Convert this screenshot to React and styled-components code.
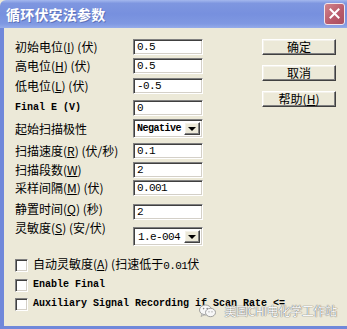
import React from 'react';
import styled, { createGlobalStyle } from 'styled-components';

const GlobalStyle = createGlobalStyle`
  html, body {
    margin: 0;
    padding: 0;
    background: #ece9d8;
  }
`;

const cjk = `"Noto Sans CJK SC", "Noto Sans", sans-serif`;
const mono = `"Liberation Mono", "DejaVu Sans Mono", monospace`;

const Window = styled.div`
  width: 347px;
  height: 329px;
  display: flex;
  flex-direction: column;
  background: #ece9d8;
  position: relative;
  overflow: hidden;
  font-family: ${cjk};
  font-size: 12px;
  color: #000;
`;

const TitleBar = styled.div`
  height: 28px;
  flex: none;
  display: flex;
  align-items: center;
  justify-content: space-between;
  padding: 0 2px 0 6px;
  border-top-left-radius: 6px;
  background: linear-gradient(#a4b8ee 0%, #7e96e0 12%, #7790de 50%, #7f98e2 85%, #95acea 100%);
`;

const Title = styled.span`
  color: #fff;
  font-family: ${cjk};
  font-weight: bold;
  font-size: 14px;
  letter-spacing: 0.2px;
  text-shadow: 1px 1px 0 #5d72b8;
`;

const CloseButton = styled.div`
  width: 19px;
  height: 20px;
  margin-top: -1px;
  display: flex;
  align-items: center;
  justify-content: center;
  border: 1px solid #f3e6ea;
  border-radius: 3px;
  background: linear-gradient(135deg, #d2848c, #b8596a 60%, #a94f60);
`;

const Body = styled.div`
  flex: 1;
  display: flex;
  flex-direction: column;
  border-left: 4px solid #7088da;
  border-bottom: 3px solid #7088da;
  padding: 11px 0 0 11px;
`;

const Top = styled.div`
  display: flex;
  align-items: flex-start;
`;

const Form = styled.div`
  display: flex;
  flex-direction: column;
`;

const Row = styled.div`
  display: flex;
  align-items: center;
  margin-top: ${(p) => p.$gap || 0}px;
`;

const Label = styled.span`
  width: 118px;
  flex: none;
  white-space: nowrap;
  font-family: ${(p) => (p.$latin ? mono : cjk)};
  font-size: ${(p) => (p.$latin ? '10px' : '12px')};
  font-weight: ${(p) => (p.$latin ? 'bold' : 'normal')};
  line-height: 14px;
  position: relative;
  top: ${(p) => -(p.$lift || 0)}px;

  u {
    text-underline-offset: 1px;
  }
`;

const sunken = `
  box-sizing: border-box;
  border-top: 1px solid #808080;
  border-left: 1px solid #808080;
  border-right: 1px solid #ffffff;
  border-bottom: 1px solid #ffffff;
  box-shadow: inset 1px 1px 0 #404040, inset -1px -1px 0 #d4d0c8;
  background: #fff;
`;

const TextField = styled.div`
  ${sunken}
  width: 70px;
  height: 16px;
  padding: 0 3px;
  display: flex;
  align-items: ${(p) => (p.$bottom ? 'flex-end' : 'center')};
  font-family: ${mono};
  font-size: 11px;
  letter-spacing: -0.6px;
  line-height: 13px;
  white-space: nowrap;
`;

const Select = styled.div`
  ${sunken}
  width: 70px;
  height: 19px;
  display: flex;
  align-items: stretch;
  padding: 2px;
`;

const SelectValue = styled.span`
  flex: 1;
  display: flex;
  align-items: center;
  padding-left: ${(p) => p.$pad || 1}px;
  font-family: ${mono};
  font-size: ${(p) => (p.$bold ? '10px' : '11px')};
  font-weight: ${(p) => (p.$bold ? 'bold' : 'normal')};
  letter-spacing: ${(p) => (p.$bold ? '-0.5px' : '-0.6px')};
  white-space: nowrap;
  overflow: hidden;
`;

const raised = `
  box-sizing: border-box;
  background: #ece9d8;
  border-top: 1px solid #ffffff;
  border-left: 1px solid #ffffff;
  border-right: 1px solid #404040;
  border-bottom: 1px solid #404040;
  box-shadow: inset -1px -1px 0 #808080, inset 1px 1px 0 #f4f2ea;
`;

const ArrowButton = styled.div`
  ${raised}
  width: 16px;
  flex: none;
  display: flex;
  align-items: center;
  justify-content: center;
`;

const Arrow = styled.span`
  width: 0;
  height: 0;
  border-left: 4px solid transparent;
  border-right: 4px solid transparent;
  border-top: 4px solid #000;
`;

const Buttons = styled.div`
  margin-left: 59px;
  display: flex;
  flex-direction: column;
  gap: ${(p) => p.$gap}px;
`;

const Button = styled.div`
  ${raised}
  width: 74px;
  height: 16px;
  display: flex;
  align-items: center;
  justify-content: center;
  font-family: ${cjk};
  font-size: 12px;
  line-height: 12px;
  white-space: nowrap;
`;

const Checks = styled.div`
  display: flex;
  flex-direction: column;
  margin-top: 12px;
`;

const CheckRow = styled.div`
  display: flex;
  align-items: center;
  gap: 5px;
  height: 14px;
  margin-top: ${(p) => p.$gap || 0}px;
  white-space: nowrap;
`;

const Box = styled.div`
  ${sunken}
  width: 13px;
  height: 13px;
  flex: none;
`;

const CheckText = styled.span`
  font-family: ${(p) => (p.$latin ? mono : cjk)};
  font-size: ${(p) => (p.$latin ? '10px' : '12px')};
  font-weight: ${(p) => (p.$latin ? 'bold' : 'normal')};
  line-height: 14px;

  em {
    font-style: normal;
    font-family: ${mono};
    font-size: 11px;
    line-height: 14px;
    letter-spacing: -0.6px;
  }
`;

const Watermark = styled.div`
  position: absolute;
  right: 10px;
  bottom: 11px;
  display: flex;
  align-items: center;
  gap: 8px;
  font-family: ${cjk};
  font-size: 12px;
  line-height: 14px;
  color: #f7f7f7;
  text-shadow: 0 0 1px #6a6a6a, 0 0 1px #6a6a6a;
  letter-spacing: -0.3px;
`;

const fields = [
  { label: <>初始电位(<u>I</u>) (伏)</>, value: '0.5', gap: 0 },
  { label: <>高电位(<u>H</u>) (伏)</>, value: '0.5', gap: 3 },
  { label: <>低电位(<u>L</u>) (伏)</>, value: '-0.5', gap: 4 },
  { label: 'Final E (V)', latin: true, value: '0', gap: 6 },
  { label: '起始扫描极性', select: 'Negative', gap: 3 },
  { label: <>扫描速度(<u>R</u>) (伏/秒)</>, value: '0.1', gap: 5 },
  { label: <>扫描段数(<u>W</u>)</>, value: '2', gap: 3, bottom: true },
  { label: <>采样间隔(<u>M</u>) (伏)</>, value: '0.001', gap: 2 },
  { label: <>静置时间(<u>Q</u>) (秒)</>, value: '2', gap: 8, lift: 3, bottom: true },
  { label: <>灵敏度(<u>S</u>) (安/伏)</>, select2: '1.e-004', gap: 7, lift: 9 },
];

function WeChatIcon() {
  return (
    <svg width="17" height="14" viewBox="0 0 17 14">
      <ellipse cx="6.5" cy="6" rx="6" ry="5" fill="#f7f7f7" stroke="#8a8a8a" strokeWidth="0.8" />
      <path d="M3 10 L2 12.5 L5.5 10.6 Z" fill="#f7f7f7" stroke="#8a8a8a" strokeWidth="0.6" />
      <ellipse cx="11.5" cy="8.5" rx="5" ry="4.2" fill="#f7f7f7" stroke="#8a8a8a" strokeWidth="0.8" />
      <circle cx="4.6" cy="4.6" r="0.8" fill="#8a8a8a" />
      <circle cx="8.2" cy="4.6" r="0.8" fill="#8a8a8a" />
      <circle cx="10" cy="7.8" r="0.6" fill="#8a8a8a" />
      <circle cx="13" cy="7.8" r="0.6" fill="#8a8a8a" />
    </svg>
  );
}

export default function App() {
  return (
    <>
      <GlobalStyle />
      <Window>
        <TitleBar>
          <Title>循环伏安法参数</Title>
          <CloseButton>
            <svg width="11" height="11" viewBox="0 0 11 11">
              <path d="M1.5 1.5 L9.5 9.5 M9.5 1.5 L1.5 9.5" stroke="#fff" strokeWidth="2" strokeLinecap="square" />
            </svg>
          </CloseButton>
        </TitleBar>
        <Body>
          <Top>
            <Form>
              {fields.map((f, i) => (
                <Row key={i} $gap={f.gap}>
                  <Label $latin={f.latin} $lift={f.lift}>{f.label}</Label>
                  {f.select && (
                    <Select>
                      <SelectValue $bold>{f.select}</SelectValue>
                      <ArrowButton><Arrow /></ArrowButton>
                    </Select>
                  )}
                  {f.select2 && (
                    <Select>
                      <SelectValue $pad={2}>{f.select2}</SelectValue>
                      <ArrowButton><Arrow /></ArrowButton>
                    </Select>
                  )}
                  {f.value !== undefined && (
                    <TextField $bottom={f.bottom}>{f.value}</TextField>
                  )}
                </Row>
              ))}
            </Form>
            <Buttons $gap={10}>
              <Button>确定</Button>
              <Button>取消</Button>
              <Button>帮助(<u>H</u>)</Button>
            </Buttons>
          </Top>
          <Checks>
            <CheckRow>
              <Box />
              <CheckText>自动灵敏度(<u>A</u>) (扫速低于<em>0.01</em>伏</CheckText>
            </CheckRow>
            <CheckRow $gap={6}>
              <Box />
              <CheckText $latin>Enable Final</CheckText>
            </CheckRow>
            <CheckRow $gap={5}>
              <Box />
              <CheckText $latin>Auxiliary Signal Recording if Scan Rate &lt;=</CheckText>
            </CheckRow>
          </Checks>
        </Body>
        <Watermark>
          <WeChatIcon />
          <span>美国CHI电化学工作站</span>
        </Watermark>
      </Window>
    </>
  );
}
